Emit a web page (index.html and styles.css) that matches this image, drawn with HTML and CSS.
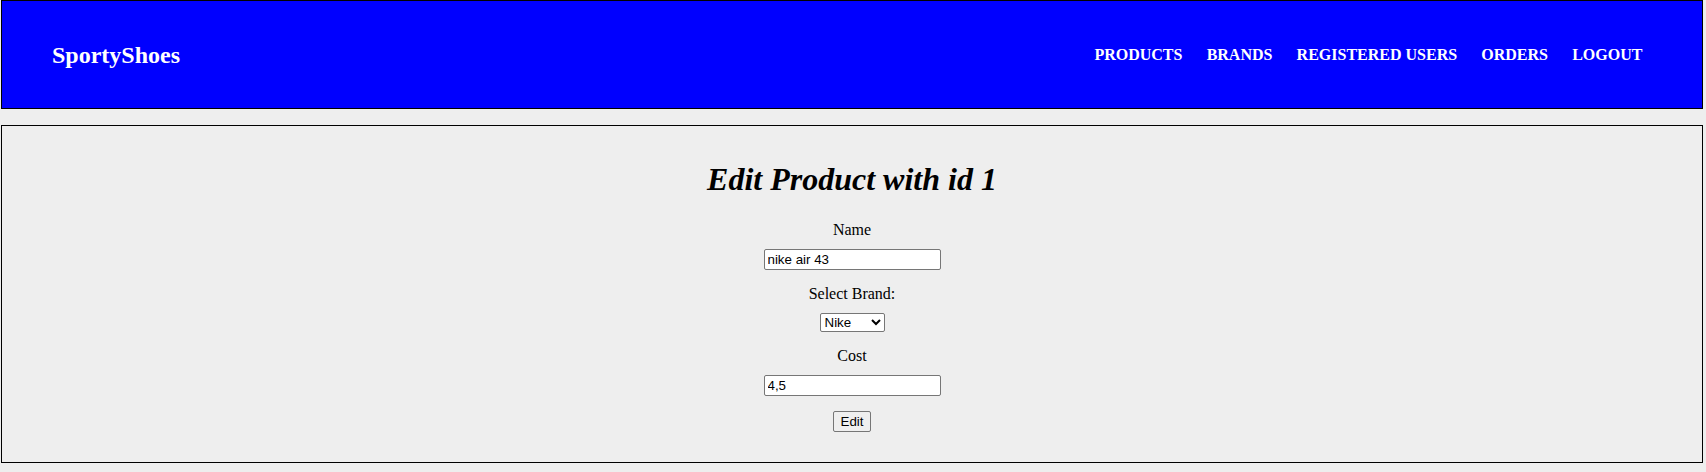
FILE: index.html
```html
<!DOCTYPE html>
<html lang="en">
<head>
<meta charset="utf-8">
<title>SportyShoes - Edit Product</title>
<link rel="stylesheet" href="styles.css">
</head>
<body>
<header class="topbar">
  <div class="brand">SportyShoes</div>
  <nav class="nav">
    <a class="nav-link" href="#">PRODUCTS</a>
    <a class="nav-link" href="#">BRANDS</a>
    <a class="nav-link" href="#">REGISTERED USERS</a>
    <a class="nav-link" href="#">ORDERS</a>
    <a class="nav-link" href="#">LOGOUT</a>
  </nav>
</header>
<main class="panel">
  <h1 class="title">Edit Product with id 1</h1>
  <form class="form">
    <label class="label label-first" for="name">Name</label>
    <input class="field field-name" id="name" type="text" value="nike air 43">
    <label class="label" for="brand">Select Brand:</label>
    <select class="select" id="brand">
      <option>Nike</option>
      <option>Adidas</option>
      <option>Puma</option>
    </select>
    <label class="label" for="cost">Cost</label>
    <input class="field field-cost" id="cost" type="text" value="4,5">
    <button class="btn" type="button">Edit</button>
  </form>
</main>
</body>
</html>
```
FILE: styles.css
```css
html {
  background: #eeeeee;
}
body {
  margin: 0 3px 0 1px;
  font-family: "Liberation Serif", "Times New Roman", serif;
  color: #000;
}
.topbar {
  box-sizing: border-box;
  height: 109px;
  background: #0000ff;
  border: 1px solid #000;
  display: flex;
  align-items: center;
  justify-content: space-between;
  padding: 0 47.5px 0 50px;
}
.brand {
  color: #fff;
  font-size: 24px;
  font-weight: bold;
  line-height: 28px;
}
.nav {
  display: flex;
  align-items: center;
}
.nav-link {
  color: #fff;
  text-decoration: none;
  font-weight: bold;
  font-size: 16px;
  line-height: 18px;
  padding: 0 12.1px;
}
.panel {
  box-sizing: border-box;
  margin-top: 16px;
  height: 338px;
  border: 1px solid #000;
  padding: 35px 0 0;
  display: flex;
  flex-direction: column;
  align-items: center;
}
.title {
  margin: 0;
  font-size: 32px;
  font-weight: bold;
  font-style: italic;
  line-height: 36px;
}
.form {
  display: flex;
  flex-direction: column;
  align-items: center;
}
.label {
  font-size: 16px;
  line-height: 18px;
  margin-top: 15px;
}
.label-first {
  margin-top: 24px;
}
.field {
  box-sizing: border-box;
  width: 177px;
  height: 21px;
  margin-top: 10px;
  padding: 1px 3px;
  border: 1px solid #767676;
  border-radius: 2px;
  background: #fff;
  font-family: "Liberation Sans", Arial, sans-serif;
  font-size: 13.333px;
  color: #000;
}
.field-name {
  margin-top: 10px;
}
.select {
  box-sizing: border-box;
  width: 65px;
  height: 19px;
  margin-top: 10px;
  border: 1px solid #767676;
  border-radius: 2px;
  background: #fff;
  font-family: "Liberation Sans", Arial, sans-serif;
  font-size: 13.333px;
  color: #000;
  padding: 0;
}
.btn {
  box-sizing: border-box;
  width: 38px;
  height: 21px;
  margin-top: 15px;
  padding: 1px 6px;
  border: 1px solid #767676;
  border-radius: 2px;
  background: #efefef;
  font-family: "Liberation Sans", Arial, sans-serif;
  font-size: 13.333px;
  color: #000;
}
```
